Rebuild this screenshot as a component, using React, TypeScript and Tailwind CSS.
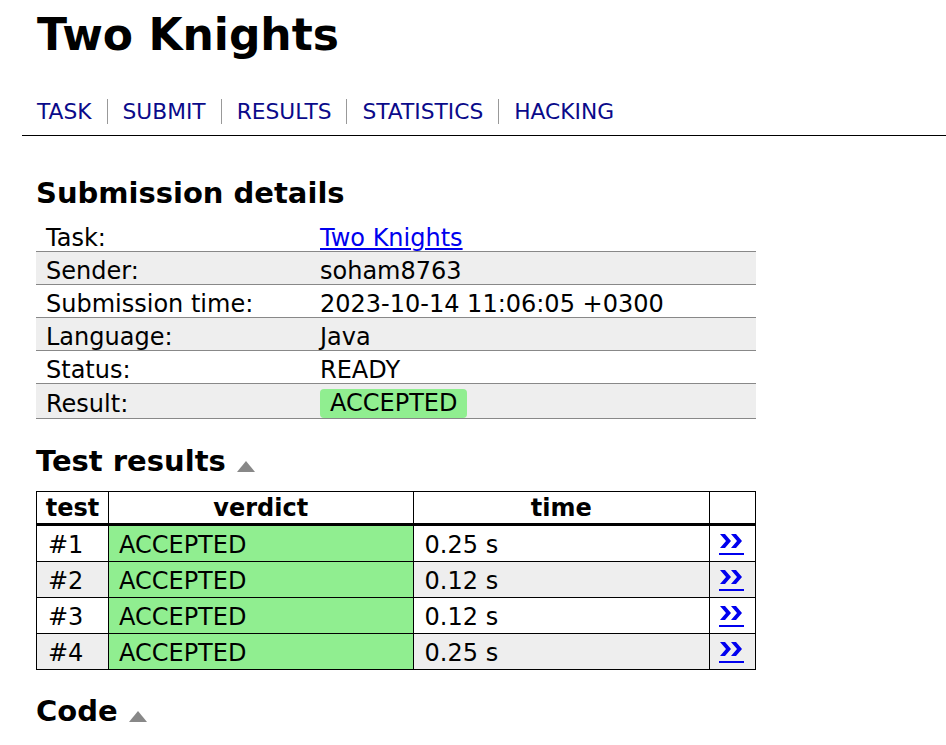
const details = [
  { label: 'Task:', value: 'Two Knights', link: true },
  { label: 'Sender:', value: 'soham8763' },
  { label: 'Submission time:', value: '2023-10-14 11:06:05 +0300' },
  { label: 'Language:', value: 'Java' },
  { label: 'Status:', value: 'READY' },
  { label: 'Result:', value: 'ACCEPTED', badge: true },
];

const tests = [
  { n: 1, verdict: 'ACCEPTED', time: '0.25 s' },
  { n: 2, verdict: 'ACCEPTED', time: '0.12 s' },
  { n: 3, verdict: 'ACCEPTED', time: '0.12 s' },
  { n: 4, verdict: 'ACCEPTED', time: '0.25 s' },
];

const navItems = ['TASK', 'SUBMIT', 'RESULTS', 'STATISTICS', 'HACKING'];

const Triangle = () => (
  <svg width="18" height="11" viewBox="0 0 18 11" className="inline-block ml-[11px] mb-[4px]">
    <polygon points="9,0 18,11 0,11" fill="#888888" />
  </svg>
);

// double chevron link to the test details
const Chevrons = () => (
  <a href="#" className="block w-[25px]">
    <svg width="25" height="14" viewBox="0 0 25 14" className="block w-[25px] h-[14px]">
      <polygon points="1,0 6,0 12,7 6,14 1,14 7,7" fill="#0000ee" />
      <polygon points="12,0 17,0 23,7 17,14 12,14 18,7" fill="#0000ee" />
    </svg>
    <span className="block w-[25px] h-[2px] bg-[#0000ee] mt-[5px]" />
  </a>
);

export default function App() {
  return (
    <div className="min-h-screen bg-white text-black font-['DejaVu_Sans','Verdana',sans-serif] text-[24px]">
      <div className="pl-[22px]">
        <div className="pl-[15px]">
          <h1 className="pt-[13px] text-[44px] leading-[44px] font-bold">Two Knights</h1>
          <div className="mt-[42px] flex text-[21.75px] leading-[25px] text-[#0a0a8a]">
            {navItems.map((item, i) => (
              <a
                key={item}
                href="#"
                className={i === 0 ? 'pr-[15px]' : 'px-[15px] border-l border-[#999]'}
              >
                {item}
              </a>
            ))}
          </div>
        </div>
        <div className="mt-[11px] h-[1px] bg-black" />

        <div className="pl-[14px]">
          <h2 className="mt-[43px] text-[29px] leading-[29px] font-bold">Submission details</h2>
          <table className="mt-[11px] w-[720px] border-collapse">
            <tbody>
              {details.map((d, i) => (
                <tr key={d.label} className={`border-b border-[#888] ${i % 2 === 1 ? 'bg-[#eeeeee]' : ''}`}>
                  <td className="w-[274px] pl-[10px] pt-[7px] leading-[25px]">{d.label}</td>
                  <td className="pl-[10px] pt-[7px] leading-[25px]">
                    {d.link ? (
                      <a href="#" className="text-[#0000ee] underline">{d.value}</a>
                    ) : d.badge ? (
                      <span className="inline-block -mt-[3px] px-[10px] rounded-[4px] bg-[#90ee90] leading-[29px]">{d.value}</span>
                    ) : (
                      d.value
                    )}
                  </td>
                </tr>
              ))}
            </tbody>
          </table>

          <h2 className="mt-[28px] text-[29px] leading-[29px] font-bold flex items-end">
            Test results <Triangle />
          </h2>
          <table className="mt-[15px] w-[720px] border-collapse border border-black">
            <thead>
              <tr>
                <th className="w-[72px] border border-black border-b-[3px] pt-[3px] pb-[1px] leading-[27px]">test</th>
                <th className="w-[305px] border border-black border-b-[3px] pt-[3px] pb-[1px] leading-[27px]">verdict</th>
                <th className="w-[297px] border border-black border-b-[3px] pt-[3px] pb-[1px] leading-[27px]">time</th>
                <th className="w-[46px] border border-black border-b-[3px]"></th>
              </tr>
            </thead>
            <tbody>
              {tests.map((t, i) => (
                <tr key={t.n} className={`h-[36px] ${i % 2 === 1 ? 'bg-[#eeeeee]' : ''}`}>
                  <td className="border border-black pl-[11px] pt-[6px] pb-[2px] leading-[27px]">#{t.n}</td>
                  <td className="border border-black bg-[#90ee90] pl-[10px] pt-[6px] pb-[2px] leading-[27px]">{t.verdict}</td>
                  <td className="border border-black pl-[11px] pt-[6px] pb-[2px] leading-[27px]">{t.time}</td>
                  <td className="border border-black pl-[9px] pt-[8px] pb-0 pr-0 align-top leading-none">
                    <Chevrons />
                  </td>
                </tr>
              ))}
            </tbody>
          </table>

          <h2 className="mt-[27px] text-[29px] leading-[29px] font-bold flex items-end">
            Code <Triangle />
          </h2>
        </div>
      </div>
    </div>
  );
}
